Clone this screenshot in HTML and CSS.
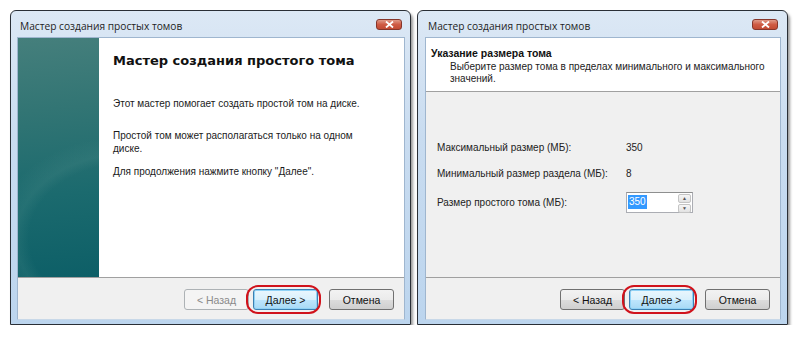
FILE: index.html
```html
<!DOCTYPE html>
<html lang="ru">
<head>
    <meta charset="UTF-8">
    <title>Мастер создания простых томов</title>
    <link rel="stylesheet" href="styles.css">
</head>
<body>
    <div class="desk">
        <!-- окно 1: приветствие -->
        <div class="window win-left">
            <div class="caption">
                <span class="caption-text">Мастер создания простых томов</span>
                <span class="close-btn">
                    <svg width="9" height="7" viewBox="0 0 9 7"><path d="M1 0.5 L8 6.5 M8 0.5 L1 6.5" stroke="#fff" stroke-width="1.8"/></svg>
                </span>
            </div>
            <div class="client">
                <div class="wiz-main">
                    <div class="side-art"></div>
                    <div class="welcome">
                        <h1 class="welcome-title">Мастер создания простого тома</h1>
                        <p class="p1">Этот мастер помогает создать простой том на диске.</p>
                        <p class="p2">Простой том может располагаться только на одном<br>диске.</p>
                        <p class="p3">Для продолжения нажмите кнопку "Далее".</p>
                    </div>
                </div>
                <div class="footer">
                    <button class="btn disabled">&lt; Назад</button>
                    <button class="btn default marked">Далее &gt;</button>
                    <button class="btn cancel">Отмена</button>
                </div>
            </div>
        </div>

        <!-- окно 2: размер тома -->
        <div class="window win-right">
            <div class="caption">
                <span class="caption-text">Мастер создания простых томов</span>
                <span class="close-btn">
                    <svg width="9" height="7" viewBox="0 0 9 7"><path d="M1 0.5 L8 6.5 M8 0.5 L1 6.5" stroke="#fff" stroke-width="1.8"/></svg>
                </span>
            </div>
            <div class="client">
                <div class="page-head">
                    <div class="head-title">Указание размера тома</div>
                    <div class="head-sub">Выберите размер тома в пределах минимального и максимального<br>значений.</div>
                </div>
                <div class="page-body">
                    <div class="size-grid">
                        <span>Максимальный размер (МБ):</span><span>350</span>
                        <span>Минимальный размер раздела (МБ):</span><span>8</span>
                        <span>Размер простого тома (МБ):</span>
                        <span class="spin">
                            <span class="spin-val"><span class="sel">350</span></span>
                            <span class="spin-btns">
                                <span class="arr">▲</span>
                                <span class="arr">▼</span>
                            </span>
                        </span>
                    </div>
                </div>
                <div class="footer">
                    <button class="btn">&lt; Назад</button>
                    <button class="btn default marked">Далее &gt;</button>
                    <button class="btn cancel">Отмена</button>
                </div>
            </div>
        </div>
    </div>
</body>
</html>
```

FILE: styles.css
```css
*{
    padding: 0;
    margin: 0;
    box-sizing: border-box;
}
body{
    background: #fff;
    font-family: "Liberation Sans", Arial, sans-serif;
    font-size: 10px;
    color: #1a1a1a;
}
.desk{
    display: flex;
    gap: 6px;
    padding: 10px 0 0 10px;
}
/* рамка окна */
.window{
    display: flex;
    flex-direction: column;
    height: 315px;
    border: 1px solid #2a2f36;
    border-radius: 6px 6px 0 0;
    background: linear-gradient(#dce8f5, #c9dcf0 40%, #bcd5ee);
    padding: 0 5px 4px 6px;
    box-shadow: 2px 3px 3px rgba(0,0,0,.4);
}
.win-left{
    width: 401px;
}
.win-right{
    width: 371px;
    padding: 0 6px 4px 7px;
}
.caption{
    height: 26px;
    display: flex;
    align-items: flex-start;
    justify-content: space-between;
}
.caption-text{
    font-family: "Open Sans", sans-serif;
    font-size: 10.2px;
    color: #1e1e1e;
    padding: 8px 0 0 3px;
}
.close-btn{
    width: 26px;
    height: 11px;
    margin-top: 8px;
    margin-right: 3px;
    border: 1px solid #86352a;
    border-radius: 3px;
    background: linear-gradient(#e09a88, #cf5b44 50%, #c24b33);
    display: flex;
    align-items: center;
    justify-content: center;
}
.client{
    flex: 1;
    display: flex;
    flex-direction: column;
    background: #f0f0f0;
    border: 1px solid #9fb6cf;
    border-bottom-color: #c8d8e8;
}
/* левое окно */
.wiz-main{
    height: 240px;
    display: flex;
    background: #fff;
    border-bottom: 1px solid #a0a0a0;
}
.side-art{
    width: 81px;
    background:
        radial-gradient(ellipse 160px 120px at 110px 200px, rgba(90,150,145,0) 62%, rgba(90,150,145,.18) 70%, rgba(90,150,145,0) 85%),
        linear-gradient(175deg, #457f7c 0%, #327574 30%, #1b6a6e 65%, #0d5f67 100%);
}
.welcome{
    padding: 14px 0 0 14px;
}
.welcome-title{
    font-family: "DejaVu Sans", Verdana, sans-serif;
    font-size: 13px;
    line-height: 18px;
    font-weight: bold;
    color: #111;
}
.welcome p{
    line-height: 13px;
}
.p1{
    margin-top: 27px;
}
.p2{
    margin-top: 19px;
}
.p3{
    margin-top: 10px;
}
/* правое окно */
.page-head{
    height: 54px;
    background: #fff;
    border-bottom: 1px solid #a0a0a0;
    padding: 8px 0 0 5px;
}
.head-title{
    font-size: 10.5px;
    font-weight: bold;
    line-height: 14px;
    color: #111;
}
.head-sub{
    padding: 1px 0 0 19px;
    line-height: 12px;
    color: #222;
}
.page-body{
    height: 186px;
    border-bottom: 1px solid #a0a0a0;
    padding: 48px 0 0 11px;
}
.size-grid{
    display: grid;
    grid-template-columns: 189px auto;
    grid-auto-rows: 14px 14px 21px;
    row-gap: 12px;
    align-items: center;
    justify-items: start;
    color: #222;
}
.spin{
    width: 67px;
    height: 21px;
    display: flex;
    border: 1px solid #abadb3;
    border-top-color: #8e8f8f;
    background: #fff;
}
.spin-val{
    flex: 1;
    padding: 2px 0 0 1px;
}
.sel{
    background: #3399ff;
    color: #fff;
    line-height: 14px;
    display: inline-block;
    padding: 0 1px;
}
.spin-btns{
    width: 15px;
    display: flex;
    flex-direction: column;
    gap: 1px;
    padding: 1px;
}
.arr{
    flex: 1;
    border: 1px solid #c4c4c4;
    border-radius: 2px;
    background: linear-gradient(#f6f6f6, #e2e2e2);
    font-size: 5px;
    line-height: 7px;
    text-align: center;
    color: #555;
}
/* кнопки */
.footer{
    flex: 1;
    display: flex;
    justify-content: flex-end;
    align-items: flex-start;
    padding: 11px 10px 0 0;
    gap: 4px;
}
.btn{
    width: 65px;
    height: 21px;
    font-family: "Liberation Sans", Arial, sans-serif;
    font-size: 10.5px;
    color: #111;
    border: 1px solid #707070;
    border-radius: 3px;
    background: linear-gradient(#f2f2f2 0%, #ebebeb 50%, #dddddd 51%, #cfcfcf 100%);
    position: relative;
}
.btn.disabled{
    color: #8a8a8a;
    border-color: #adb2b5;
    background: #f4f4f4;
}
.btn.default{
    border-color: #3c7fb1;
    background: linear-gradient(#eaf6fd 0%, #d9f0fc 50%, #bee6fd 51%, #a7d9f5 100%);
    box-shadow: inset 0 0 0 1px #8fd2f6;
}
.btn.cancel{
    margin-left: 7px;
}
/* красная обводка поверх кнопки */
.marked::after{
    content: "";
    position: absolute;
    top: -5px;
    bottom: -5px;
    left: -8px;
    right: -4px;
    border: 2.5px solid #d0121b;
    border-radius: 12px;
}
```
